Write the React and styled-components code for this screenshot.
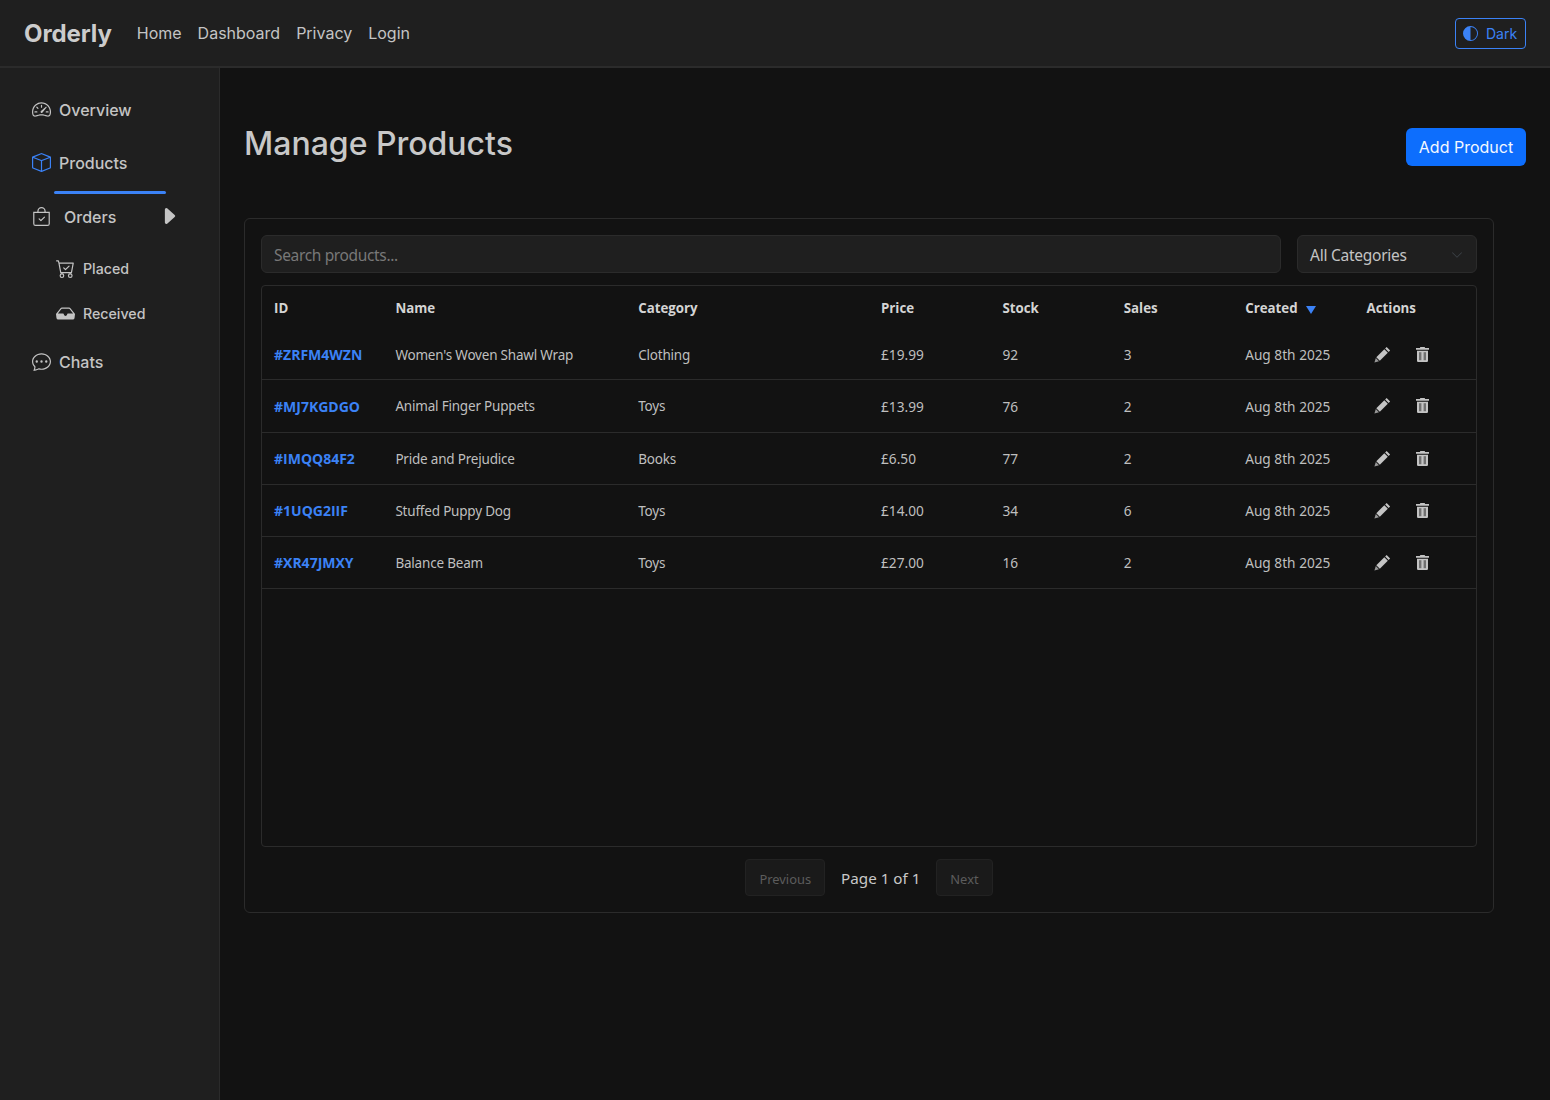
import React from "react";
import styled, { createGlobalStyle } from "styled-components";
import { BsSpeedometer2, BsBox, BsBagCheck, BsCartCheck, BsInboxFill, BsChatDots, BsCircleHalf, BsCaretRightFill, BsChevronDown } from "react-icons/bs";

const Global = createGlobalStyle`
  html, body { margin: 0; padding: 0; background: #121212; }
  body { font-family: "Noto Sans", sans-serif; color: #dee2e6; }
  * { box-sizing: border-box; }
`;
const Page = styled.div`display: flex; flex-direction: column; width: 1550px; height: 1100px; overflow: hidden;`;
const Navbar = styled.header`
  height: 68px; flex: none; display: flex; align-items: center; padding: 0 24px 1px;
  background: #1f1f1f; border-bottom: 2px solid #2b2b2b;
`;
const Brand = styled.div`font: 700 24px/1 Inter, sans-serif; color: #ccc; margin: 2px 25px 0 0; letter-spacing: -0.1px;`;
const NavLinks = styled.nav`display: flex; gap: 16px;`;
const NavLink = styled.a`font: 400 16px/24px Inter, sans-serif; color: #c4c4c4;`;
const ThemeButton = styled.button`
  margin: 2px 0 0 auto; width: 71px; height: 31px; display: flex; align-items: center; gap: 8px; padding: 0 7px;
  background: transparent; border: 1px solid #3b82f6; border-radius: 4px; color: #3b82f6;
  font: 400 14px/1 Inter, sans-serif;
  svg { width: 15px; height: 15px; flex: none; margin-top: -1px; }
`;
const Body = styled.div`display: flex; flex: 1; min-height: 0;`;
const Sidebar = styled.aside`
  width: 220px; flex: none; background: #1f1f1f; border-right: 1px solid #2b2b2b;
  padding: 15px 0 0 31px; display: flex; flex-direction: column;
`;
const SideItem = styled.a`
  display: flex; align-items: center; gap: 8px; height: 53px; padding-left: 1px;
  font: 500 16px/24px Inter, sans-serif; color: #c4c4c4;
  svg { width: 19px; height: 19px; flex: none; color: ${p => (p.$active ? "#3b82f6" : "#c4c4c4")}; }
`;
const Underline = styled.div`width: 112px; height: 3px; border-radius: 2px; background: #3b82f6; margin: 2px 0 0 23px;`;
const OrdersRow = styled(SideItem)`
  width: 149px; height: 45px; gap: 13px;
  & > svg { margin-top: -1px; }
`;
const Caret = styled.span`
  margin-left: auto; display: flex; margin-top: -1px;
  svg { width: 22px; height: 22px; }
`;
const SubList = styled.div`display: flex; flex-direction: column; margin: 7px 0 -1px;`;
const SubItem = styled.a`
  display: flex; align-items: center; gap: 8px; height: 45px; padding-left: 25px;
  font: 500 14.2px/20px Inter, sans-serif; color: #c4c4c4;
  svg { width: 19px; height: 19px; flex: none; margin-top: -1px; }
`;
const Main = styled.main`flex: 1; padding: 60px 24px 0; min-width: 0;`;
const Heading = styled.div`display: flex; justify-content: space-between; align-items: flex-start; height: 90px;`;
const Title = styled.h1`margin: 0; font: 500 32px/32px Inter, sans-serif; color: #c8c8c8;`;
const AddButton = styled.button`
  width: 120px; height: 38px; background: #0d6efd; border: none; border-radius: 6px; color: #f4f8ff;
  font: 400 16px/24px Inter, sans-serif; padding: 0;
`;
const Card = styled.section`
  width: 1250px; height: 695px; border: 1px solid #2b2b2b; border-radius: 6px; padding: 16px;
  display: flex; flex-direction: column;
`;
const Filters = styled.div`display: flex; gap: 16px; height: 38px; margin-bottom: 12px;`;
const Search = styled.div`
  flex: 1; background: #1f1f1f; border: 1px solid #2b2b2b; border-radius: 6px; padding: 1px 12px 0;
  display: flex; align-items: center; font-size: 15.5px; letter-spacing: -0.35px; color: #787878;
`;
const Select = styled.div`
  width: 180px; flex: none; background: #1f1f1f; border: 1px solid #2b2b2b; border-radius: 6px; padding: 1px 12px 0;
  display: flex; align-items: center; justify-content: space-between; font-size: 15.5px; letter-spacing: -0.25px; color: #c4c4c4;
  svg { width: 12px; height: 12px; color: #3e444a; margin-right: 1px; }
`;
const TableBox = styled.div`height: 562px; border: 1px solid #2b2b2b; border-radius: 4px; overflow: hidden;`;
const Table = styled.table`width: 100%; border-collapse: collapse; table-layout: fixed;`;
const Th = styled.th`
  text-align: left; padding: 0 12px; height: 44px; font: 700 13.3px "Open Sans", sans-serif; color: #d4d4d4;
  width: ${p => p.$w}%;
`;
const SortMark = styled.span`
  display: inline-block; margin-left: 8px; vertical-align: -1px;
  border-left: 5px solid transparent; border-right: 5px solid transparent; border-top: 8px solid #3b82f6;
`;
const Td = styled.td`
  padding: 1px 12px 0; height: ${p => p.$h}px; color: #bfbfbf; border-bottom: 1px solid #2b2b2b;
  font-size: ${p => (p.$numeric ? "13.7px" : "13.5px")};
  letter-spacing: ${p => (p.$numeric ? "0" : "-0.2px")};
`;
const IdLink = styled.a`font: 700 14px "Open Sans", sans-serif; letter-spacing: 0; color: #3b82f6;`;
const Actions = styled.div`
  display: flex; align-items: center; gap: 25px; padding-left: 7px; margin-top: -1px;
  svg { flex: none; }
`;
const Pager = styled.div`display: flex; justify-content: center; align-items: center; gap: 16px; height: 37px; margin-top: 12px;`;
const PageButton = styled.button`
  height: 37px; padding: 2px 13px 0; background: #1a1a1a; border: 1px solid #222; border-radius: 4px;
  color: #5c5c5c; font: 400 12.9px "Noto Sans", sans-serif;
`;
const PageText = styled.span`font-size: 15.2px; color: #c8c8c8;`;

const PencilIcon = () => (
  <svg width="17" height="17" viewBox="0 0 17 17" fill="#c4c4c4" aria-hidden="true">
    <path d="M12.6 0.9 16.1 4.4 14.6 5.9 11.1 2.4Z" />
    <path d="M10.3 3.2 13.8 6.7 5.8 14.7 2.3 11.2Z" />
    <path d="M1.8 12 5 15.2 0.4 16.6Z" opacity="0.75" />
  </svg>
);
const TrashIcon = () => (
  <svg width="13" height="15" viewBox="0 0 13 15" fill="#c4c4c4" aria-hidden="true">
    <path d="M4.4 0H8.6L9.2 1H13V2.8H0V1H3.8Z" />
    <path d="M1 3.7H12V13.4C12 14.3 11.4 15 10.5 15H2.5C1.6 15 1 14.3 1 13.4Z" />
    <rect x="3" y="5.2" width="2.4" height="8" fill="#707070" />
    <rect x="7.6" y="5.2" width="2.4" height="8" fill="#707070" />
  </svg>
);

const columns = [["ID", 10], ["Name", 20], ["Category", 20], ["Price", 10], ["Stock", 10], ["Sales", 10], ["Created", 10], ["Actions", 10]];
const rows = [
  ["#ZRFM4WZN", "Women's Woven Shawl Wrap", "Clothing", "£19.99", "92", "3", 49],
  ["#MJ7KGDGO", "Animal Finger Puppets", "Toys", "£13.99", "76", "2", 53],
  ["#IMQQ84F2", "Pride and Prejudice", "Books", "£6.50", "77", "2", 52],
  ["#1UQG2IIF", "Stuffed Puppy Dog", "Toys", "£14.00", "34", "6", 52],
  ["#XR47JMXY", "Balance Beam", "Toys", "£27.00", "16", "2", 52],
];

export default function App() {
  return (
    <Page>
      <Global />
      <Navbar>
        <Brand>Orderly</Brand>
        <NavLinks>
          {["Home", "Dashboard", "Privacy", "Login"].map(l => <NavLink key={l}>{l}</NavLink>)}
        </NavLinks>
        <ThemeButton><BsCircleHalf />Dark</ThemeButton>
      </Navbar>
      <Body>
        <Sidebar>
          <SideItem><BsSpeedometer2 />Overview</SideItem>
          <SideItem $active><BsBox />Products</SideItem>
          <Underline />
          <OrdersRow><BsBagCheck />Orders<Caret><BsCaretRightFill /></Caret></OrdersRow>
          <SubList>
            <SubItem><BsCartCheck />Placed</SubItem>
            <SubItem><BsInboxFill />Received</SubItem>
          </SubList>
          <SideItem><BsChatDots />Chats</SideItem>
        </Sidebar>
        <Main>
          <Heading>
            <Title>Manage Products</Title>
            <AddButton>Add Product</AddButton>
          </Heading>
          <Card>
            <Filters>
              <Search>Search products...</Search>
              <Select>All Categories<BsChevronDown /></Select>
            </Filters>
            <TableBox>
              <Table>
                <thead>
                  <tr>
                    {columns.map(([c, w]) => (
                      <Th key={c} $w={w}>{c}{c === "Created" && <SortMark />}</Th>
                    ))}
                  </tr>
                </thead>
                <tbody>
                  {rows.map(r => (
                    <tr key={r[0]}>
                      <Td $h={r[6]}><IdLink>{r[0]}</IdLink></Td>
                      <Td $h={r[6]}>{r[1]}</Td>
                      <Td $h={r[6]}>{r[2]}</Td>
                      <Td $h={r[6]} $numeric>{r[3]}</Td>
                      <Td $h={r[6]} $numeric>{r[4]}</Td>
                      <Td $h={r[6]} $numeric>{r[5]}</Td>
                      <Td $h={r[6]} $numeric>Aug 8th 2025</Td>
                      <Td $h={r[6]}><Actions><PencilIcon /><TrashIcon /></Actions></Td>
                    </tr>
                  ))}
                </tbody>
              </Table>
            </TableBox>
            <Pager>
              <PageButton disabled>Previous</PageButton>
              <PageText>Page 1 of 1</PageText>
              <PageButton disabled>Next</PageButton>
            </Pager>
          </Card>
        </Main>
      </Body>
    </Page>
  );
}
